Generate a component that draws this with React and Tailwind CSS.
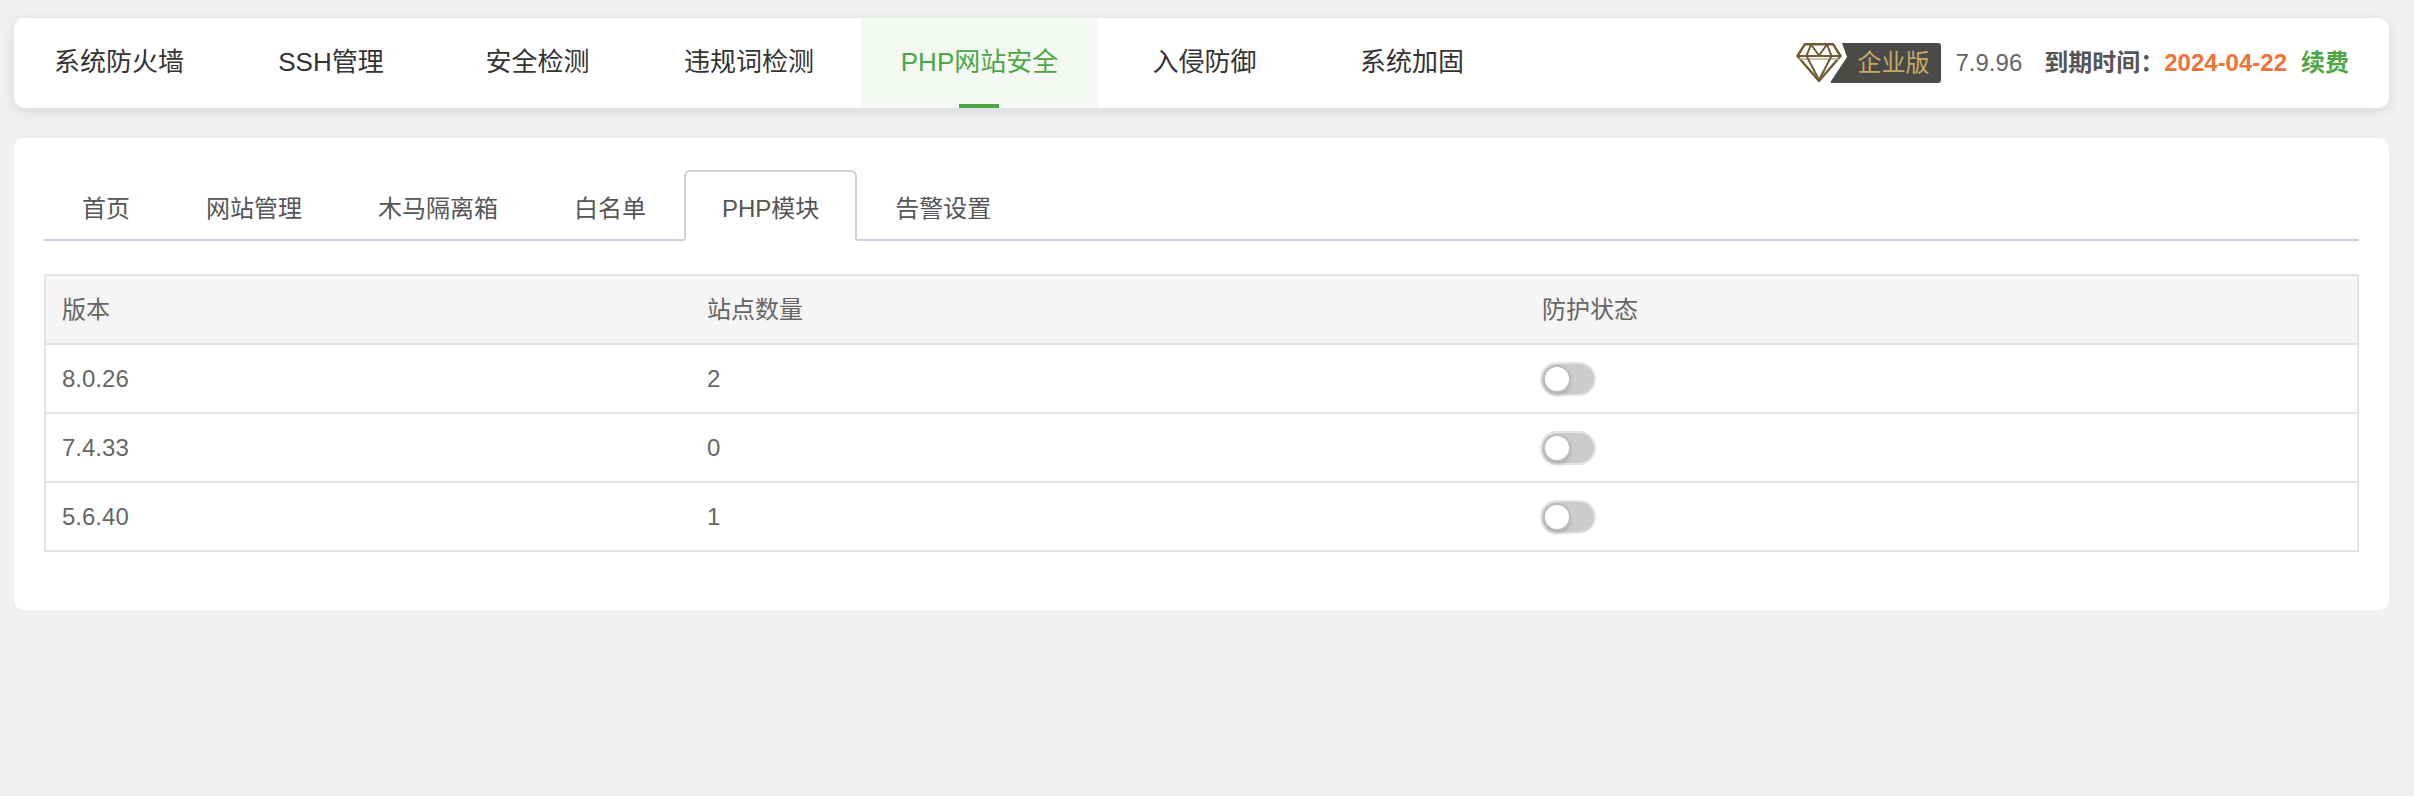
const FONT = "font-['Liberation_Sans','Noto_Sans_CJK_SC',sans-serif]";

const NAV = [
  { label: "系统防火墙", width: "w-[210px]" },
  { label: "SSH管理", width: "w-[214px]" },
  { label: "安全检测", width: "w-[199px]" },
  { label: "违规词检测", width: "w-[224px]" },
  { label: "PHP网站安全", width: "w-[237px]", active: true },
  { label: "入侵防御", width: "w-[213px]" },
  { label: "系统加固", width: "w-[202px]" },
];

const TABS = ["首页", "网站管理", "木马隔离箱", "白名单", "PHP模块", "告警设置"];

const ROWS = [
  { version: "8.0.26", sites: 2 },
  { version: "7.4.33", sites: 0 },
  { version: "5.6.40", sites: 1 },
];

function Diamond() {
  return (
    <svg width="46" height="40" viewBox="0 0 46 40" fill="none" className="shrink-0">
      <path d="M9 1.2H37L44.6 13L23 38L1.4 13Z" stroke="#6f5a32" strokeWidth="2.4" strokeLinejoin="round" />
      <path d="M2 13H44" stroke="#6f5a32" strokeWidth="2" />
      <path d="M3 16H43" stroke="#b9ad97" strokeWidth="1.5" />
      <path d="M15 1.5L10.5 13L23 37L35.5 13L31 1.5" stroke="#6f5a32" strokeWidth="2" />
      <path d="M15 1.5L23 12.5L31 1.5" stroke="#6f5a32" strokeWidth="2" strokeLinejoin="round" />
    </svg>
  );
}

function Badge() {
  return (
    <div className="relative h-10 w-[111px]">
      <svg width="111" height="40" viewBox="0 0 111 40" className="absolute inset-0">
        <path d="M12 0H108Q111 0 111 3V37Q111 40 108 40H2Q0 40 0.8 38.5L17 14Z" fill="#4a4a47" />
      </svg>
      <span className="absolute left-[28px] top-0 text-[24px] leading-10 text-[#c9a769]">企业版</span>
    </div>
  );
}

function Switch() {
  return (
    <div className="relative h-[30px] w-[52px] rounded-full bg-[#cccccc] shadow-[0_0_0_2px_#e4e4e4]">
      <span className="absolute left-[3px] top-[3px] h-6 w-6 rounded-full bg-white shadow-[0_0_0_2px_#bdbdbd,0_3px_4px_1px_rgba(0,0,0,0.2)]" />
    </div>
  );
}

export default function App() {
  return (
    <div className={`${FONT} h-[796px] overflow-hidden bg-[#f0f0f0] pl-[14px] pr-[25px] pt-[18px]`}>
      <div className="flex h-[90px] items-center justify-between rounded-[10px] bg-white shadow-[0_3px_12px_rgba(0,0,0,0.1)]">
        <div className="flex h-full text-[26px] text-[#333333]">
          {NAV.map((item) => (
            <div
              key={item.label}
              className={
                item.active
                  ? "relative flex h-full w-[237px] items-center justify-center bg-[#f3f8f2] pb-[1px] text-[#4da644]"
                  : `flex h-full items-center justify-center pb-[1px] ${item.width}`
              }
            >
              {item.label}
              {item.active && <span className="absolute bottom-0 left-[98px] h-1 w-10 bg-[#4da644]" />}
            </div>
          ))}
        </div>

        <div className="flex h-full items-center pr-[40px] text-[24px] leading-none">
          <div className="flex items-center">
            <Diamond />
            <div className="-ml-3">
              <Badge />
            </div>
          </div>
          <span className="ml-[15px] text-[#666666]">7.9.96</span>
          <span className="ml-[22px] font-bold text-[#555555]">到期时间：</span>
          <span className="font-bold text-[#ef7238]">2024-04-22</span>
          <span className="ml-[14px] font-bold text-[#4da644]">续费</span>
        </div>
      </div>

      <div className="mt-[30px] h-[472px] rounded-[10px] bg-white px-[30px] pt-[32px]">
        <div className="flex h-[71px] border-b-2 border-[#cfcde0] text-[24px] text-[#555555]">
          {TABS.map((tab) =>
            tab === "PHP模块" ? (
              <div
                key={tab}
                className="h-[71px] rounded-t-[6px] border-2 border-[#cfcde0] border-b-white bg-white px-[36px] pt-[19px] text-[#555555]"
              >
                {tab}
              </div>
            ) : (
              <div key={tab} className="px-[38px] pt-[21px]">
                {tab}
              </div>
            )
          )}
        </div>

        <table className="mt-[33px] w-full table-fixed border-collapse text-left text-[24px] text-[#666666]">
          <colgroup>
            <col className="w-[646px]" />
            <col className="w-[835px]" />
            <col />
          </colgroup>
          <thead>
            <tr className="h-[69px] bg-[#f5f5f5]">
              <th className="border-2 border-r-0 border-[#e3e3e3] pl-4 font-normal">版本</th>
              <th className="border-y-2 border-[#e3e3e3] pl-4 font-normal">站点数量</th>
              <th className="border-2 border-l-0 border-[#e3e3e3] pl-4 font-normal">防护状态</th>
            </tr>
          </thead>
          <tbody>
            {ROWS.map((row) => (
              <tr key={row.version} className="h-[69px]">
                <td className="border-2 border-r-0 border-[#e3e3e3] pl-4">{row.version}</td>
                <td className="border-y-2 border-[#e3e3e3] pl-4">{row.sites}</td>
                <td className="border-2 border-l-0 border-[#e3e3e3] pl-4">
                  <Switch />
                </td>
              </tr>
            ))}
          </tbody>
        </table>
      </div>
    </div>
  );
}
